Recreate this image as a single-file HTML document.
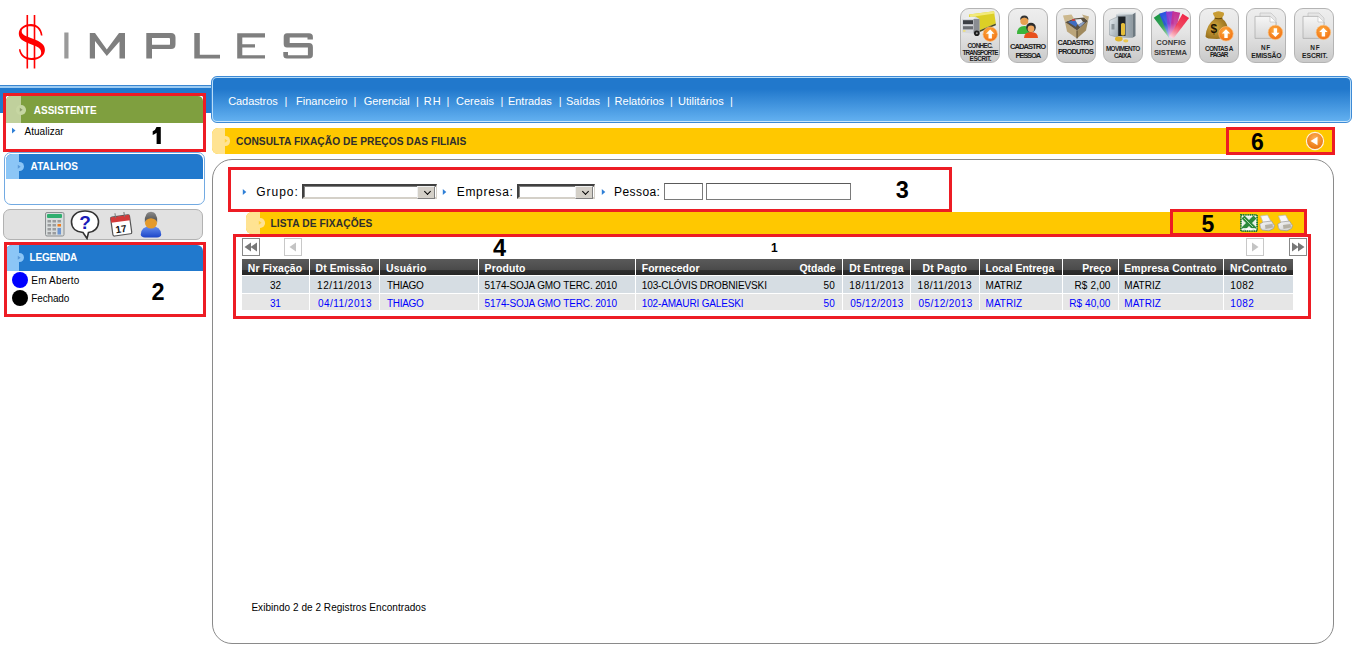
<!DOCTYPE html>
<html><head><meta charset="utf-8">
<style>
*{margin:0;padding:0;box-sizing:border-box}
html,body{width:1352px;height:648px;overflow:hidden;background:#fff;font-family:"Liberation Sans",sans-serif;position:relative}
.a{position:absolute}
.t{position:absolute;white-space:nowrap;line-height:1}
/* toolbar */
.tb{position:absolute;top:8px;width:40px;height:55px;border:1px solid #b4b4b4;border-radius:9px;background:linear-gradient(#eeeeee,#e4e4e4 45%,#c9c9c9);overflow:hidden}
.tb .lbl{position:absolute;left:-4px;right:-4px;text-align:center;font-family:"Liberation Sans",sans-serif;font-weight:bold;color:#333;font-size:6px;line-height:7px;letter-spacing:-0.2px}
/* redbox */
.rb{position:absolute;border:3px solid #ed1c24}
.num{position:absolute;font-family:"Liberation Sans",sans-serif;font-weight:bold;font-size:21px;line-height:1;color:#000}
.hdr{position:absolute;height:26px;border-radius:6px 6px 0 0;overflow:hidden}
.hdr .lt{position:absolute;left:0;top:0;bottom:0;width:13px}
.hdr .ring{position:absolute;left:8px;top:8px;width:10px;height:10px;border-radius:50%;border:2px solid rgba(255,255,255,0.35)}
.hdr .tx{position:absolute;left:24px;top:9px;font-weight:bold;font-size:10.2px;line-height:1;color:#fff;white-space:nowrap}
.menu span{position:absolute;top:96px;color:#fff;font-size:11px;line-height:1;white-space:nowrap}
.sel{background:#fff;border-top:2px solid #404040;border-left:2px solid #404040;border-right:1px solid #d4d0c8;border-bottom:2px solid #d4d0c8;box-shadow:inset 1px 1px 0 #808080}
.sel:after{content:"";position:absolute;right:1px;top:0px;width:16px;height:11px;background:#d4d0c8;border:1px solid #808080;border-top-color:#f0f0f0;border-left-color:#f0f0f0}
.sel:before{content:"";position:absolute;right:6.5px;top:2.5px;width:4px;height:4px;border-right:1.5px solid #000;border-bottom:1.5px solid #000;transform:rotate(45deg);z-index:2}
.inp{background:#fff;border:1px solid #7a7a7a;border-top-color:#5a5a5a}
.pbtn{width:18px;height:18px;border:1px solid #888;background:#fff}
.pbtn svg{position:absolute;left:0;top:0}
.th{position:absolute;top:259px;height:16px;background:linear-gradient(#5a5a5a,#4a4a4a 70%,#2e2e2e 72%,#262626);color:#fff;font-weight:bold;font-size:10.4px;line-height:18px;white-space:nowrap;overflow:hidden}
.td{position:absolute;font-size:10px;white-space:nowrap;overflow:hidden}
.r1{top:276px;height:17px;background:#d6dde3;color:#000;line-height:18px}
.r2{top:294px;height:16px;background:#e6e6e6;color:#0000ff;line-height:17px}
</style></head><body>

<!-- LOGO -->
<svg class="a" style="left:0;top:0" width="330" height="75" viewBox="0 0 330 75">
  <path d="M42.5 35.5 C41.7 28 37 24 31 24 C23.5 24 18.8 28.5 18.8 33.5 C18.8 38.5 22.5 41 29 43.5 L36 46.3 C39.8 47.8 41.2 50 41.2 52.8 C41.2 56.3 37.5 57.9 31.5 57.9 C25.5 57.9 21.5 55 20.4 49.3 L18.9 49.3 C19.5 55.5 24.5 60.1 31.5 60.1 C39.5 60.1 44.9 55.5 44.9 50 C44.9 44.5 40.5 41.5 33.5 39 L27 36.6 C23.5 35.3 21.7 33.5 21.7 31.5 C21.7 28.3 25.5 26.3 31 26.3 C36.5 26.3 40 29.5 40.9 35.5 Z" fill="#ff0000"/>
  <rect x="26.5" y="15" width="1.6" height="53.5" fill="#ff0000"/>
  <rect x="33.7" y="15" width="1.6" height="53.5" fill="#ff0000"/>
  <rect x="64.3" y="32.5" width="4.2" height="26" fill="#9a9a9a"/>
  <g fill="#7f7f7f">
    <path d="M89.8 33 H95 L106.8 49.5 L119 33 H125 V58.5 H119.5 V41.5 L106.8 56 L95 41 V58.5 H89.8 Z"/>
    <path d="M146.3 33 H171 Q175.5 33 175.5 37.5 V44.5 Q175.5 49 171 49 H152 V58.5 H146.3 Z M152 38 V44.7 H169.7 Q170 44.7 170 44 V39 Q170 38 169 38 Z" fill-rule="evenodd"/>
    <path d="M194.3 33 H199.8 V54.7 H220 V58.5 H194.3 Z"/>
    <path d="M237.2 33.3 H265 V37.6 H242.3 V44.3 H255 V47.6 H242.3 V55.3 H265 V58.6 H237.2 Z"/>
    <path d="M287 33.3 H309 Q312.9 33.3 312.9 37 V39.6 H307.5 V37.6 H289.7 V43 H309 Q312.9 43 312.9 47 V54.8 Q312.9 58.6 309 58.6 H287 Q283.3 58.6 283.3 55 V52 H288 V55.3 H307.9 V47.6 H287 Q283.7 47.6 283.7 44 V37 Q283.7 33.3 287 33.3 Z"/>
  </g>
</svg>

<!-- TOOLBAR -->
<!--TB-->
<svg class="a" width="0" height="0"><defs><radialGradient id="og" cx="0.45" cy="0.35" r="0.7"><stop offset="0" stop-color="#ffb040"/><stop offset="1" stop-color="#f06a10"/></radialGradient><linearGradient id="dg" x1="0" y1="0" x2="0" y2="1"><stop offset="0" stop-color="#f6f6f6"/><stop offset="1" stop-color="#d8d8d8"/></linearGradient></defs></svg>
<div class="tb" style="left:960px"><svg class="a" style="left:-1px;top:-1px" width="40" height="40" viewBox="0 0 40 40"><defs></defs><g><path d="M9 6.5 L34 3.2 L35.8 15.5 L18 23 L9 20 Z" fill="#dccf26"/><path d="M9 6.5 L34 3.2 L34.8 5.6 L10.5 9 Z" fill="#f2ea7a"/><path d="M18 23 L35.8 15.5 L35.8 17.2 L18 24.8 Z" fill="#4a4a20"/><path d="M2 11 L6 9 L16 8.8 L19.5 11 V24.5 L16 26 L2 24.5 Z" fill="#d6d8dc"/><path d="M2 11 L6 9 L16 8.8 L13.5 11 Z" fill="#eceef0"/><path d="M13.5 11 L19.5 11 V24.5 L16 26 L13.5 25 Z" fill="#8a8d92"/><rect x="3" y="12.2" width="10" height="4" fill="#3c3f44"/><rect x="3" y="18.2" width="10" height="3.2" fill="#6a6d72"/><rect x="3" y="22.2" width="2.5" height="1.5" fill="#f0e070"/><circle cx="16.8" cy="25.2" r="2.8" fill="#1e1e1e"/><circle cx="16.8" cy="25.2" r="1" fill="#9a9a9a"/><circle cx="30.2" cy="26.2" r="7.2" fill="url(#og)" stroke="#fbc27a" stroke-width="0.7"/><path d="M30.2 21.6 L26 25.8 H28.5 V30.4 H31.9 V25.8 H34.4 Z" fill="#fff"/></g></svg></div>
<div class="tb" style="left:1008px"><svg class="a" style="left:-1px;top:-1px" width="40" height="40" viewBox="0 0 40 40"><defs></defs><g><circle cx="16.3" cy="13" r="4" fill="#e8a050"/><path d="M12.2 12 Q12 7.5 16.3 7.5 Q20.6 7.5 20.4 12 Q19 9.5 16.3 9.5 Q13.6 9.5 12.2 12 Z" fill="#333"/><path d="M9 26 Q9 18 16.5 18 Q23 18 23 26 Z" fill="#3cb43c"/><circle cx="23" cy="19.5" r="4.8" fill="#2c2c2c"/><circle cx="23" cy="20.8" r="3.4" fill="#f0a860"/><path d="M16 30 Q16 24 23 24 Q30 24 30 30 Z" fill="#e8501c"/></g></svg></div>
<div class="tb" style="left:1056px"><svg class="a" style="left:-1px;top:-1px" width="40" height="40" viewBox="0 0 40 40"><defs></defs><g><path d="M9 14 L21 22.5 L21 30.5 L11 23.5 Z" fill="#bba57a"/><path d="M21 22.5 L32 13 L30 22.5 L21 30.5 Z" fill="#a08a5e"/><path d="M9 14 L18 10.5 L28 9.5 L32 13 L21 22.5 Z" fill="#5a5040"/><path d="M12 14 L18 12 L22 14 L20 19 Z" fill="#3f6cc0"/><path d="M19 11.5 L25 11 L27 14 L22 17 Z" fill="#e6eaf0"/><path d="M22 17 L27 14 L29 14.5 L24 19 Z" fill="#8aa0c8"/><rect x="16" y="11" width="3" height="2" fill="#c04040"/><path d="M9 14 L7 7.5 L15.5 6.5 L18 10.5 Z" fill="#ccb88e"/><path d="M28 9.5 L26 6.5 L33 8.5 L32 13 Z" fill="#c0ab80"/><path d="M21 22.5 L21 30.5" stroke="#3a3020" stroke-width="0.8"/></g></svg></div>
<div class="tb" style="left:1103px"><svg class="a" style="left:-1px;top:-1px" width="40" height="40" viewBox="0 0 40 40"><defs></defs><g><defs><linearGradient id="sfb" x1="0" y1="0" x2="1" y2="0"><stop offset="0" stop-color="#c4ccd2"/><stop offset="1" stop-color="#8e9aa2"/></linearGradient><linearGradient id="sfd" x1="0" y1="0" x2="1" y2="1"><stop offset="0" stop-color="#e8eef2"/><stop offset="1" stop-color="#9aa6ae"/></linearGradient></defs><path d="M13 6.5 L17 4.5 H32.5 L29.5 6.5 Z" fill="#dfe5e8"/><rect x="13" y="6.5" width="16.5" height="23.3" fill="url(#sfb)"/><path d="M29.5 6.5 L32.5 4.5 V28 L29.5 29.8 Z" fill="#6c7880"/><rect x="15" y="8.5" width="7.5" height="19.5" fill="#1e2328"/><path d="M6.5 12.5 L15 8.5 V29.5 L6.5 27 Z" fill="url(#sfd)" stroke="#8a949a" stroke-width="0.5"/><rect x="8.5" y="16" width="3" height="5.5" fill="#8a949a"/><rect x="18" y="15" width="4" height="12.5" rx="1.6" fill="#e6be3a"/><ellipse cx="15.8" cy="31" rx="3.8" ry="2.4" fill="#e0b42a"/><ellipse cx="22.8" cy="32.8" rx="2.6" ry="1.6" fill="#ecc850"/></g></svg></div>
<div class="tb" style="left:1151px"><svg class="a" style="left:-1px;top:-1px" width="40" height="40" viewBox="0 0 40 40"><defs></defs><g><defs><linearGradient id="fg0" x1="6.0" y1="7.5" x2="20.4" y2="29.5" gradientUnits="userSpaceOnUse"><stop offset="0" stop-color="#1c9644"/><stop offset="0.45" stop-color="#1c9644" stop-opacity="0.85"/><stop offset="1" stop-color="#c8ecd0"/></linearGradient><linearGradient id="fg1" x1="12.0" y1="4.5" x2="20.4" y2="29.5" gradientUnits="userSpaceOnUse"><stop offset="0" stop-color="#2a52e0"/><stop offset="0.45" stop-color="#2a52e0" stop-opacity="0.85"/><stop offset="1" stop-color="#d0dbf8"/></linearGradient><linearGradient id="fg2" x1="18.8" y1="3.5" x2="20.4" y2="29.5" gradientUnits="userSpaceOnUse"><stop offset="0" stop-color="#8a38d0"/><stop offset="0.45" stop-color="#8a38d0" stop-opacity="0.85"/><stop offset="1" stop-color="#e8d4f6"/></linearGradient><linearGradient id="fg3" x1="25.4" y1="4.0" x2="20.4" y2="29.5" gradientUnits="userSpaceOnUse"><stop offset="0" stop-color="#c43094"/><stop offset="0.45" stop-color="#c43094" stop-opacity="0.85"/><stop offset="1" stop-color="#f6d4ea"/></linearGradient><linearGradient id="fg4" x1="34.8" y1="7.8" x2="20.4" y2="29.5" gradientUnits="userSpaceOnUse"><stop offset="0" stop-color="#f02848"/><stop offset="0.45" stop-color="#f02848" stop-opacity="0.85"/><stop offset="1" stop-color="#fcd8de"/></linearGradient></defs><path d="M22.24 28.30 L18.56 30.70 L2.74 9.64 L9.26 5.36 Z" fill="url(#fg0)"/><path d="M22.49 28.80 L18.31 30.20 L8.30 5.74 L15.70 3.26 Z" fill="url(#fg1)"/><path d="M22.60 29.36 L18.20 29.64 L14.91 3.74 L22.69 3.26 Z" fill="url(#fg2)"/><path d="M22.56 29.92 L18.24 29.08 L21.57 3.25 L29.23 4.75 Z" fill="url(#fg3)"/><path d="M22.23 30.72 L18.57 28.28 L31.55 5.64 L38.05 9.96 Z" fill="url(#fg4)"/></g></svg></div>
<div class="tb" style="left:1199px"><svg class="a" style="left:-1px;top:-1px" width="40" height="40" viewBox="0 0 40 40"><defs></defs><g><defs><radialGradient id="bgg" cx="0.4" cy="0.45" r="0.7"><stop offset="0" stop-color="#d8ac40"/><stop offset="1" stop-color="#8a6418"/></radialGradient></defs><path d="M14.5 7 Q13 4 16 4.2 Q19.5 2.5 22.5 4 Q25.8 4 24.8 7.2 L22.5 10.5 L16.5 10.5 Z" fill="#c89c34"/><path d="M16.5 10 L22.5 10 Q29.5 15 29 24 Q28.5 31 18 31 Q6.5 31 6.5 28.5 Q7 17 16.5 10 Z" fill="url(#bgg)"/><path d="M15.5 10 Q19.5 11.5 23.5 10" stroke="#6a4a08" stroke-width="1.2" fill="none"/><text x="11.6" y="25" font-family="Liberation Sans" font-weight="bold" font-size="12" fill="#1e1400">$</text><circle cx="27" cy="25.8" r="7.2" fill="url(#og)" stroke="#fbc27a" stroke-width="0.7"/><path d="M27 21.2 L22.8 25.4 H25.3 V30 H28.7 V25.4 H31.2 Z" fill="#fff"/></g></svg></div>
<div class="tb" style="left:1246px"><svg class="a" style="left:-1px;top:-1px" width="40" height="40" viewBox="0 0 40 40"><defs></defs><g><path d="M14 5 H25 L30 10 V28 H14 Z" fill="#e6e6e6" stroke="#bcbcbc" stroke-width="0.6"/><path d="M9 8.4 H24 L30 14 V30.4 H9 Z" fill="url(#dg)" stroke="#a8a8a8" stroke-width="0.7"/><path d="M24 8.4 V14 H30" fill="#fff" stroke="#bbb" stroke-width="0.6"/><circle cx="29.4" cy="24.4" r="7.2" fill="url(#og)" stroke="#fbc27a" stroke-width="0.7"/><path d="M29.4 29.0 L25.2 24.799999999999997 H27.7 V20.2 H31.099999999999998 V24.799999999999997 H33.6 Z" fill="#fff"/></g></svg></div>
<div class="tb" style="left:1294px"><svg class="a" style="left:-1px;top:-1px" width="40" height="40" viewBox="0 0 40 40"><defs></defs><g><path d="M14 5 H25 L30 10 V28 H14 Z" fill="#e6e6e6" stroke="#bcbcbc" stroke-width="0.6"/><path d="M9 8.4 H24 L30 14 V30.4 H9 Z" fill="url(#dg)" stroke="#a8a8a8" stroke-width="0.7"/><path d="M24 8.4 V14 H30" fill="#fff" stroke="#bbb" stroke-width="0.6"/><circle cx="29.4" cy="24.4" r="7.2" fill="url(#og)" stroke="#fbc27a" stroke-width="0.7"/><path d="M29.4 19.799999999999997 L25.2 24.0 H27.7 V28.599999999999998 H31.099999999999998 V24.0 H33.6 Z" fill="#fff"/></g></svg></div>
<!--/TB-->

<!-- left blue strip -->
<div class="a" style="left:0;top:85px;width:212px;height:28px;background:#2179cd;border-top:1px solid #3a86d0"></div>
<div class="a" style="left:0;top:86px;width:212px;height:1.5px;background:#9ccbf2"></div>

<div class="a" style="left:1340px;top:85px;width:12px;height:28px;background:#2179cd;border-top:1px solid #3a86d0"></div>
<div class="a" style="left:1340px;top:86px;width:12px;height:1.5px;background:#9ccbf2"></div>
<!-- MENU BAR -->
<div class="a" style="left:211px;top:76px;width:1141px;height:47px;border-radius:6px;border:1px solid #3d8ad6;background:linear-gradient(#2178cc 0px,#2178cc 12px,#62b0f0 44px)"></div>
<div class="a" style="left:212px;top:77px;width:1139px;height:45px;border-radius:5px;border:1px solid #b7dcf8;border-bottom-color:#c9e6fb"></div>


<!-- SIDEBAR -->
<div class="a" style="left:5px;top:95px;width:199px;height:56px;background:#fff;border-radius:5px 5px 0 0"></div>
<div class="hdr" style="left:6px;top:96px;width:197px;height:27px;background:#7f9f3f;border-radius:5px 5px 0 0">
  <div class="lt" style="width:15px;background:#c0d09c"></div>
  <div class="ring" style="left:10.35px;top:9.05px;width:9.5px;height:9.5px;border:0;background:#c6d6a2"><svg style="position:absolute;left:0;top:0" width="10" height="10"><path d="M3.8 2.8 L6.6 4.75 L3.8 6.7 Z" fill="rgba(90,110,60,0.55)"/></svg></div>
</div>
<svg class="a" style="left:11px;top:127px" width="6" height="8"><path d="M1 0.8 L4.5 3.6 L1 6.6 Z" fill="#2f7fd6"/></svg>
<div class="rb" style="left:3px;top:93px;width:203px;height:59px"></div>

<div class="a" style="left:4px;top:152px;width:201px;height:53px;border:1px solid #72aae2;border-radius:7px"></div>
<div class="hdr" style="left:6px;top:153.5px;width:197px;height:25.5px;background:#2179cd;border-radius:6px 6px 0 0">
  <div class="lt" style="width:13px;background:#8cc6f6"></div>
  <div class="ring" style="left:8.25px;top:8.05px;width:9.5px;height:9.5px;border:0;background:#8cc6f6"><svg style="position:absolute;left:0;top:0" width="10" height="10"><path d="M3.8 2.8 L6.6 4.75 L3.8 6.7 Z" fill="rgba(40,110,190,0.5)"/></svg></div>
</div>

<div class="a" style="left:3px;top:209px;width:200px;height:31px;border:1.8px solid #b2b2b2;border-radius:7px;background:#e1e1e1"></div>
<!-- calculator -->
<svg class="a" style="left:44px;top:211px" width="22" height="27" viewBox="0 0 22 27">
  <rect x="1.5" y="1.5" width="18.5" height="23.5" rx="1.5" fill="#d8dcdc" stroke="#8a8e90" stroke-width="1"/>
  <rect x="3" y="3" width="15" height="4" rx="1" fill="#2fae6f"/>
  <g fill="#9a9c9e"><rect x="3.5" y="9" width="3.5" height="2.5"/><rect x="8.5" y="9" width="3.5" height="2.5"/><rect x="13.5" y="9" width="3.5" height="2.5"/>
  <rect x="3.5" y="13" width="3.5" height="2.5"/><rect x="8.5" y="13" width="3.5" height="2.5"/>
  <rect x="3.5" y="17" width="3.5" height="2.5"/><rect x="8.5" y="17" width="3.5" height="2.5"/>
  <rect x="3.5" y="21" width="3.5" height="2.5"/><rect x="8.5" y="21" width="3.5" height="2.5"/></g>
  <rect x="13.5" y="13" width="3.5" height="2.5" fill="#f07f1e"/><rect x="13.5" y="17" width="3.5" height="6.5" fill="#6f96d0"/>
</svg>
<!-- question bubble -->
<svg class="a" style="left:70px;top:209px" width="31" height="31" viewBox="0 0 31 31">
  <path d="M15 2 C23 2 28.5 6.5 28.5 13 C28.5 19 24 23 18.5 23.5 L17 29.5 L13 23.5 C6 23 1.5 19 1.5 13 C1.5 6.5 7 2 15 2 Z" fill="#fff" stroke="#333" stroke-width="1.6"/>
  <text x="9.3" y="19.6" font-family="Liberation Sans" font-weight="bold" font-size="19" fill="#1a1ab8">?</text>
</svg>
<!-- calendar -->
<svg class="a" style="left:109px;top:211px" width="25" height="26" viewBox="0 0 25 26">
  <g transform="rotate(-8 12 13)">
  <rect x="2.5" y="5" width="19" height="19" rx="1.5" fill="#fff" stroke="#555" stroke-width="1.2"/>
  <rect x="2.5" y="5" width="19" height="5.5" fill="#d23a3a"/>
  <rect x="7" y="1.5" width="1" height="5" fill="#777"/><rect x="16" y="1.5" width="1" height="5" fill="#777"/>
  <text x="5.8" y="21.5" font-family="Liberation Sans" font-weight="bold" font-size="10" fill="#111">17</text>
  </g>
</svg>
<!-- person -->
<svg class="a" style="left:140px;top:211px" width="23" height="27" viewBox="0 0 23 27">
  <defs><linearGradient id="pbg" x1="0" y1="0" x2="0" y2="1"><stop offset="0" stop-color="#6690f0"/><stop offset="1" stop-color="#1d46c8"/></linearGradient>
  <linearGradient id="pcap" x1="0" y1="0" x2="0" y2="1"><stop offset="0" stop-color="#8a8a8a"/><stop offset="1" stop-color="#4a4a4a"/></linearGradient></defs>
  <path d="M0.8 23.5 Q1 15.2 11 15.2 Q21 15.2 21.2 23.5 Q21.2 26.2 17 26.4 H5 Q0.8 26.2 0.8 23.5 Z" fill="url(#pbg)"/>
  <ellipse cx="11" cy="12" rx="6" ry="5.6" fill="#e39a2c"/>
  <path d="M4.8 11.5 Q4.2 0.8 11 0.8 Q17.8 0.8 17.2 11.5 Q16 7.5 11 7.2 Q6 7.5 4.8 11.5 Z" fill="url(#pcap)"/>
</svg>

<div class="hdr" style="left:6px;top:245px;width:197px;height:26px;background:#2179cd;border-radius:6px 6px 0 0">
  <div class="lt" style="width:13px;background:#8cc6f6"></div>
  <div class="ring" style="left:8.25px;top:7.85px;width:9.5px;height:9.5px;border:0;background:#8cc6f6"><svg style="position:absolute;left:0;top:0" width="10" height="10"><path d="M3.8 2.8 L6.6 4.75 L3.8 6.7 Z" fill="rgba(40,110,190,0.5)"/></svg></div>
</div>
<div class="a" style="left:12px;top:272px;width:16px;height:16px;border-radius:50%;background:#0000ff"></div>
<div class="a" style="left:12px;top:290px;width:16px;height:16px;border-radius:50%;background:#000"></div>
<div class="rb" style="left:3.5px;top:242px;width:202px;height:75px"></div>

<!-- TITLE BAR -->
<div class="hdr" style="left:211.5px;top:128px;width:1122px;height:26px;background:#ffc800;border-radius:6px 0 0 6px">
  <div class="lt" style="width:13.5px;background:#ffe392"></div>
  <div class="ring" style="left:9.45px;top:8.25px;width:9.5px;height:9.5px;border:0;background:#ffe392"><svg style="position:absolute;left:0;top:0" width="10" height="10"><path d="M3.8 2.8 L6.6 4.75 L3.8 6.7 Z" fill="rgba(255,200,0,0.6)"/></svg></div>
</div>
<svg class="a" style="left:1305px;top:131px" width="20" height="20" viewBox="0 0 20 20">
  <defs><radialGradient id="bg2" cx="0.5" cy="0.35" r="0.7"><stop offset="0" stop-color="#ffb25a"/><stop offset="1" stop-color="#e66a00"/></radialGradient></defs>
  <circle cx="10" cy="10" r="8.6" fill="url(#bg2)" stroke="#fff3dc" stroke-width="1.2"/>
  <path d="M5.5 10 L12.5 5.8 V14.2 Z" fill="#fff"/>
</svg>
<div class="rb" style="left:1226px;top:127px;width:109px;height:28px"></div>

<!-- MAIN BOX -->
<div class="a" style="left:212px;top:159px;width:1122px;height:485px;border:1.6px solid #8a8a8a;border-radius:20px"></div>


<!-- FILTER ROW -->
<svg class="a" style="left:242px;top:188px" width="6" height="8"><path d="M0.8 1 L4.3 4 L0.8 7 Z" fill="#2f7fd6"/></svg>
<div class="a sel" style="left:302px;top:184px;width:135px;height:15px"></div>
<svg class="a" style="left:442px;top:188px" width="6" height="8"><path d="M0.8 1 L4.3 4 L0.8 7 Z" fill="#2f7fd6"/></svg>
<div class="a sel" style="left:517px;top:184px;width:78px;height:15px"></div>
<svg class="a" style="left:601px;top:188px" width="6" height="8"><path d="M0.8 1 L4.3 4 L0.8 7 Z" fill="#2f7fd6"/></svg>
<div class="a inp" style="left:664px;top:183px;width:39px;height:17px"></div>
<div class="a inp" style="left:706px;top:183px;width:145px;height:17px"></div>
<div class="rb" style="left:228px;top:167px;width:724px;height:45px"></div>

<!-- LISTA BAR -->
<div class="hdr" style="left:246px;top:212px;width:1059px;height:22px;background:#ffc800;border-radius:6px 0 0 6px">
  <div class="lt" style="width:14px;background:#ffe392"></div>
  <div class="ring" style="left:9.25px;top:6.05px;width:9.5px;height:9.5px;border:0;background:#ffe392"><svg style="position:absolute;left:0;top:0" width="10" height="10"><path d="M3.8 2.8 L6.6 4.75 L3.8 6.7 Z" fill="rgba(255,200,0,0.6)"/></svg></div>
</div>
<!-- excel + printers -->
<svg class="a" style="left:1240px;top:214px" width="18" height="18" viewBox="0 0 18 18">
  <rect x="0.9" y="0.9" width="16.2" height="16.2" fill="#fff" stroke="#1f7a2f" stroke-width="1.8" stroke-dasharray="1.3 0.5"/>
  <rect x="2.5" y="2.5" width="13" height="13" fill="#e8f0e8"/>
  <path d="M4.5 4.5 L13.5 13.5 M13.5 4.5 L4.5 13.5" stroke="#2c8a3c" stroke-width="4.2" stroke-linecap="square"/>
  <path d="M4 4 L13 13" stroke="#d8f0d8" stroke-width="0.7"/>
  <rect x="3" y="14.2" width="12" height="1.6" fill="#fff"/>
</svg>
<svg class="a" style="left:1259px;top:214px" width="17" height="18" viewBox="0 0 17 18">
  <defs><linearGradient id="pg" x1="0" y1="0" x2="1" y2="1"><stop offset="0" stop-color="#fafafa"/><stop offset="1" stop-color="#c8c8c8"/></linearGradient></defs>
  <path d="M1.5 2 L8.5 1 L12 7.5 L4.5 9.5 Z" fill="#f8f8f8" stroke="#b8b8b8" stroke-width="0.7"/>
  <path d="M0.8 10 L4.5 8 L12.5 7 L15.5 11.5 L14.5 14.5 L10 16.8 L3 16 Q0.8 14 0.8 10 Z" fill="url(#pg)" stroke="#9a9a9a" stroke-width="0.7"/>
  <path d="M6 11 L13.5 10 L14 13.5 L6.5 15 Z" fill="#b4b0a4"/>
</svg>
<svg class="a" style="left:1277px;top:214px" width="17" height="18" viewBox="0 0 17 18">
  <path d="M1.5 2 L8.5 1 L12 7.5 L4.5 9.5 Z" fill="#f8f8f8" stroke="#b8b8b8" stroke-width="0.7"/>
  <path d="M0.8 10 L4.5 8 L12.5 7 L15.5 11.5 L14.5 14.5 L10 16.8 L3 16 Q0.8 14 0.8 10 Z" fill="url(#pg)" stroke="#9a9a9a" stroke-width="0.7"/>
  <path d="M6 11 L13.5 10 L14 13.5 L6.5 15 Z" fill="#b4b0a4"/>
</svg>
<div class="rb" style="left:1170px;top:209px;width:137px;height:27px"></div>

<!-- PAGER -->
<div class="a pbtn" style="left:242px;top:238px"><svg width="16" height="16" viewBox="0 0 16 16"><path d="M1.5 8 L8 3.5 V12.5 Z M7.5 8 L14 3.5 V12.5 Z" fill="#777"/></svg></div>
<div class="a pbtn" style="left:284px;top:238px;border-color:#c8c8c8"><svg width="16" height="16" viewBox="0 0 16 16"><path d="M4.5 8 L11 3.5 V12.5 Z" fill="#c4c4c4"/></svg></div>
<div class="a pbtn" style="left:1246px;top:238px;border-color:#c8c8c8"><svg width="16" height="16" viewBox="0 0 16 16"><path d="M11.5 8 L5 3.5 V12.5 Z" fill="#c4c4c4"/></svg></div>
<div class="a pbtn" style="left:1289px;top:238px"><svg width="16" height="16" viewBox="0 0 16 16"><path d="M8.5 8 L2 3.5 V12.5 Z M14.5 8 L8 3.5 V12.5 Z" fill="#777"/></svg></div>

<!-- TABLE -->
<div class="th" style="left:242px;width:67px;text-align:center;"></div>
<div class="td r1" style="left:242px;width:67px;text-align:center;"></div>
<div class="td r2" style="left:242px;width:67px;text-align:center;"></div>
<div class="th" style="left:310px;width:69px;text-align:center;"></div>
<div class="td r1" style="left:310px;width:69px;text-align:center;"></div>
<div class="td r2" style="left:310px;width:69px;text-align:center;"></div>
<div class="th" style="left:380px;width:98px;text-align:left;padding:0 6px"></div>
<div class="td r1" style="left:380px;width:98px;text-align:left;padding:0 6px"></div>
<div class="td r2" style="left:380px;width:98px;text-align:left;padding:0 6px"></div>
<div class="th" style="left:479px;width:156px;text-align:left;padding:0 6px"></div>
<div class="td r1" style="left:479px;width:156px;text-align:left;padding:0 6px"></div>
<div class="td r2" style="left:479px;width:156px;text-align:left;padding:0 6px"></div>
<div class="th" style="left:636px;width:154px;text-align:left;padding:0 6px"></div>
<div class="td r1" style="left:636px;width:154px;text-align:left;padding:0 6px"></div>
<div class="td r2" style="left:636px;width:154px;text-align:left;padding:0 6px"></div>
<div class="th" style="left:790px;width:52px;text-align:right;padding:0 6px"></div>
<div class="td r1" style="left:790px;width:52px;text-align:right;padding:0 6px"></div>
<div class="td r2" style="left:790px;width:52px;text-align:right;padding:0 6px"></div>
<div class="th" style="left:843px;width:67px;text-align:center;"></div>
<div class="td r1" style="left:843px;width:67px;text-align:center;"></div>
<div class="td r2" style="left:843px;width:67px;text-align:center;"></div>
<div class="th" style="left:911px;width:68px;text-align:center;"></div>
<div class="td r1" style="left:911px;width:68px;text-align:center;"></div>
<div class="td r2" style="left:911px;width:68px;text-align:center;"></div>
<div class="th" style="left:980px;width:82px;text-align:left;padding:0 6px"></div>
<div class="td r1" style="left:980px;width:82px;text-align:left;padding:0 6px"></div>
<div class="td r2" style="left:980px;width:82px;text-align:left;padding:0 6px"></div>
<div class="th" style="left:1063px;width:55px;text-align:right;padding:0 6px"></div>
<div class="td r1" style="left:1063px;width:55px;text-align:right;padding:0 6px"></div>
<div class="td r2" style="left:1063px;width:55px;text-align:right;padding:0 6px"></div>
<div class="th" style="left:1119px;width:104px;text-align:left;padding:0 6px"></div>
<div class="td r1" style="left:1119px;width:104px;text-align:left;padding:0 6px"></div>
<div class="td r2" style="left:1119px;width:104px;text-align:left;padding:0 6px"></div>
<div class="th" style="left:1224px;width:69px;text-align:left;padding:0 6px"></div>
<div class="td r1" style="left:1224px;width:69px;text-align:left;padding:0 6px"></div>
<div class="td r2" style="left:1224px;width:69px;text-align:left;padding:0 6px"></div>
<div class="rb" style="left:233px;top:234px;width:1078px;height:85px;"></div>


<svg class="a" style="left:150px;top:125px" width="14" height="21" viewBox="150 125 14 21"><path d="M156.5 127 H160.8 V144 H156.6 V132.8 Q154.9 134.2 152.7 134.9 V131.3 Q155.6 130.2 156.5 127 Z" fill="#000"/></svg>
<div class="a" style="left:228.20px;top:96.00px;color:#fff;font-family:&quot;Liberation Sans&quot;,sans-serif;font-size:11px;font-weight:normal;letter-spacing:-0.075px;line-height:1;white-space:nowrap">Cadastros</div>
<div class="a" style="left:284.40px;top:96.00px;color:#fff;font-family:&quot;Liberation Sans&quot;,sans-serif;font-size:11px;font-weight:normal;letter-spacing:0.000px;line-height:1;white-space:nowrap">|</div>
<div class="a" style="left:296.00px;top:96.00px;color:#fff;font-family:&quot;Liberation Sans&quot;,sans-serif;font-size:11px;font-weight:normal;letter-spacing:0.000px;line-height:1;white-space:nowrap">Financeiro</div>
<div class="a" style="left:353.60px;top:96.00px;color:#fff;font-family:&quot;Liberation Sans&quot;,sans-serif;font-size:11px;font-weight:normal;letter-spacing:0.000px;line-height:1;white-space:nowrap">|</div>
<div class="a" style="left:363.80px;top:96.00px;color:#fff;font-family:&quot;Liberation Sans&quot;,sans-serif;font-size:11px;font-weight:normal;letter-spacing:-0.150px;line-height:1;white-space:nowrap">Gerencial</div>
<div class="a" style="left:416.00px;top:96.00px;color:#fff;font-family:&quot;Liberation Sans&quot;,sans-serif;font-size:11px;font-weight:normal;letter-spacing:0.000px;line-height:1;white-space:nowrap">|</div>
<div class="a" style="left:423.80px;top:96.00px;color:#fff;font-family:&quot;Liberation Sans&quot;,sans-serif;font-size:11px;font-weight:normal;letter-spacing:1.000px;line-height:1;white-space:nowrap">RH</div>
<div class="a" style="left:446.50px;top:96.00px;color:#fff;font-family:&quot;Liberation Sans&quot;,sans-serif;font-size:11px;font-weight:normal;letter-spacing:0.000px;line-height:1;white-space:nowrap">|</div>
<div class="a" style="left:455.90px;top:96.00px;color:#fff;font-family:&quot;Liberation Sans&quot;,sans-serif;font-size:11px;font-weight:normal;letter-spacing:0.050px;line-height:1;white-space:nowrap">Cereais</div>
<div class="a" style="left:500.50px;top:96.00px;color:#fff;font-family:&quot;Liberation Sans&quot;,sans-serif;font-size:11px;font-weight:normal;letter-spacing:0.000px;line-height:1;white-space:nowrap">|</div>
<div class="a" style="left:508.00px;top:96.00px;color:#fff;font-family:&quot;Liberation Sans&quot;,sans-serif;font-size:11px;font-weight:normal;letter-spacing:-0.043px;line-height:1;white-space:nowrap">Entradas</div>
<div class="a" style="left:558.80px;top:96.00px;color:#fff;font-family:&quot;Liberation Sans&quot;,sans-serif;font-size:11px;font-weight:normal;letter-spacing:0.000px;line-height:1;white-space:nowrap">|</div>
<div class="a" style="left:565.90px;top:96.00px;color:#fff;font-family:&quot;Liberation Sans&quot;,sans-serif;font-size:11px;font-weight:normal;letter-spacing:-0.020px;line-height:1;white-space:nowrap">Saídas</div>
<div class="a" style="left:607.00px;top:96.00px;color:#fff;font-family:&quot;Liberation Sans&quot;,sans-serif;font-size:11px;font-weight:normal;letter-spacing:0.000px;line-height:1;white-space:nowrap">|</div>
<div class="a" style="left:614.60px;top:96.00px;color:#fff;font-family:&quot;Liberation Sans&quot;,sans-serif;font-size:11px;font-weight:normal;letter-spacing:-0.011px;line-height:1;white-space:nowrap">Relatórios</div>
<div class="a" style="left:670.00px;top:96.00px;color:#fff;font-family:&quot;Liberation Sans&quot;,sans-serif;font-size:11px;font-weight:normal;letter-spacing:0.000px;line-height:1;white-space:nowrap">|</div>
<div class="a" style="left:678.00px;top:96.00px;color:#fff;font-family:&quot;Liberation Sans&quot;,sans-serif;font-size:11px;font-weight:normal;letter-spacing:0.050px;line-height:1;white-space:nowrap">Utilitários</div>
<div class="a" style="left:730.00px;top:96.00px;color:#fff;font-family:&quot;Liberation Sans&quot;,sans-serif;font-size:11px;font-weight:normal;letter-spacing:0.000px;line-height:1;white-space:nowrap">|</div>
<div class="a" style="left:33.80px;top:106.00px;color:#fff;font-family:&quot;Liberation Sans&quot;,sans-serif;font-size:10px;font-weight:bold;letter-spacing:0.000px;line-height:1;white-space:nowrap">ASSISTENTE</div>
<div class="a" style="left:24.50px;top:127.00px;color:#000;font-family:&quot;Liberation Sans&quot;,sans-serif;font-size:10px;font-weight:normal;letter-spacing:0.025px;line-height:1;white-space:nowrap">Atualizar</div>
<div class="a" style="left:30.60px;top:162.00px;color:#fff;font-family:&quot;Liberation Sans&quot;,sans-serif;font-size:10px;font-weight:bold;letter-spacing:0.083px;line-height:1;white-space:nowrap">ATALHOS</div>
<div class="a" style="left:29.60px;top:253.00px;color:#fff;font-family:&quot;Liberation Sans&quot;,sans-serif;font-size:10px;font-weight:bold;letter-spacing:-0.217px;line-height:1;white-space:nowrap">LEGENDA</div>
<div class="a" style="left:31.30px;top:276.00px;color:#000;font-family:&quot;Liberation Sans&quot;,sans-serif;font-size:10px;font-weight:normal;letter-spacing:0.175px;line-height:1;white-space:nowrap">Em Aberto</div>
<div class="a" style="left:31.30px;top:294.00px;color:#000;font-family:&quot;Liberation Sans&quot;,sans-serif;font-size:10px;font-weight:normal;letter-spacing:-0.150px;line-height:1;white-space:nowrap">Fechado</div>
<div class="a" style="left:151.50px;top:281.00px;color:#000;font-family:&quot;Liberation Sans&quot;,sans-serif;font-size:23.5px;font-weight:bold;letter-spacing:0.000px;line-height:1;white-space:nowrap">2</div>
<div class="a" style="left:895.70px;top:179.00px;color:#000;font-family:&quot;Liberation Sans&quot;,sans-serif;font-size:23.5px;font-weight:bold;letter-spacing:0.000px;line-height:1;white-space:nowrap">3</div>
<div class="a" style="left:493.10px;top:237.00px;color:#000;font-family:&quot;Liberation Sans&quot;,sans-serif;font-size:23.5px;font-weight:bold;letter-spacing:0.000px;line-height:1;white-space:nowrap">4</div>
<div class="a" style="left:1201.60px;top:213.00px;color:#000;font-family:&quot;Liberation Sans&quot;,sans-serif;font-size:23px;font-weight:bold;letter-spacing:0.000px;line-height:1;white-space:nowrap">5</div>
<div class="a" style="left:1250.90px;top:131.00px;color:#000;font-family:&quot;Liberation Sans&quot;,sans-serif;font-size:23px;font-weight:bold;letter-spacing:0.000px;line-height:1;white-space:nowrap">6</div>
<div class="a" style="left:236.00px;top:137.00px;color:#2e2e2e;font-family:&quot;Liberation Sans&quot;,sans-serif;font-size:10.2px;font-weight:bold;letter-spacing:0.049px;line-height:1;white-space:nowrap">CONSULTA FIXAÇÃO DE PREÇOS DAS FILIAIS</div>
<div class="a" style="left:270.40px;top:219.00px;color:#2e2e2e;font-family:&quot;Liberation Sans&quot;,sans-serif;font-size:10.2px;font-weight:bold;letter-spacing:0.112px;line-height:1;white-space:nowrap">LISTA DE FIXAÇÕES</div>
<div class="a" style="left:256.20px;top:186.00px;color:#000;font-family:&quot;Liberation Sans&quot;,sans-serif;font-size:12px;font-weight:normal;letter-spacing:0.980px;line-height:1;white-space:nowrap">Grupo:</div>
<div class="a" style="left:456.70px;top:186.00px;color:#000;font-family:&quot;Liberation Sans&quot;,sans-serif;font-size:12px;font-weight:normal;letter-spacing:0.700px;line-height:1;white-space:nowrap">Empresa:</div>
<div class="a" style="left:614.00px;top:186.00px;color:#000;font-family:&quot;Liberation Sans&quot;,sans-serif;font-size:12px;font-weight:normal;letter-spacing:0.433px;line-height:1;white-space:nowrap">Pessoa:</div>
<div class="a" style="left:771.00px;top:242.00px;color:#000;font-family:&quot;Liberation Sans&quot;,sans-serif;font-size:12px;font-weight:bold;letter-spacing:0.000px;line-height:1;white-space:nowrap">1</div>
<div class="a" style="left:251.40px;top:603.00px;color:#000;font-family:&quot;Liberation Sans&quot;,sans-serif;font-size:10px;font-weight:normal;letter-spacing:0.047px;line-height:1;white-space:nowrap">Exibindo 2 de 2 Registros Encontrados</div>
<div class="a" style="left:247.80px;top:264.00px;color:#fff;font-family:&quot;Liberation Sans&quot;,sans-serif;font-size:10.4px;font-weight:bold;letter-spacing:0.133px;line-height:1;white-space:nowrap">Nr Fixação</div>
<div class="a" style="left:315.60px;top:264.00px;color:#fff;font-family:&quot;Liberation Sans&quot;,sans-serif;font-size:10.4px;font-weight:bold;letter-spacing:0.067px;line-height:1;white-space:nowrap">Dt Emissão</div>
<div class="a" style="left:385.90px;top:264.00px;color:#fff;font-family:&quot;Liberation Sans&quot;,sans-serif;font-size:10.4px;font-weight:bold;letter-spacing:0.283px;line-height:1;white-space:nowrap">Usuário</div>
<div class="a" style="left:484.60px;top:264.00px;color:#fff;font-family:&quot;Liberation Sans&quot;,sans-serif;font-size:10.4px;font-weight:bold;letter-spacing:0.167px;line-height:1;white-space:nowrap">Produto</div>
<div class="a" style="left:641.80px;top:264.00px;color:#fff;font-family:&quot;Liberation Sans&quot;,sans-serif;font-size:10.4px;font-weight:bold;letter-spacing:0.056px;line-height:1;white-space:nowrap">Fornecedor</div>
<div class="a" style="left:799.40px;top:264.00px;color:#fff;font-family:&quot;Liberation Sans&quot;,sans-serif;font-size:10.4px;font-weight:bold;letter-spacing:0.060px;line-height:1;white-space:nowrap">Qtdade</div>
<div class="a" style="left:849.20px;top:264.00px;color:#fff;font-family:&quot;Liberation Sans&quot;,sans-serif;font-size:10.4px;font-weight:bold;letter-spacing:0.189px;line-height:1;white-space:nowrap">Dt Entrega</div>
<div class="a" style="left:922.40px;top:264.00px;color:#fff;font-family:&quot;Liberation Sans&quot;,sans-serif;font-size:10.4px;font-weight:bold;letter-spacing:0.257px;line-height:1;white-space:nowrap">Dt Pagto</div>
<div class="a" style="left:985.60px;top:264.00px;color:#fff;font-family:&quot;Liberation Sans&quot;,sans-serif;font-size:10.4px;font-weight:bold;letter-spacing:-0.008px;line-height:1;white-space:nowrap">Local Entrega</div>
<div class="a" style="left:1082.20px;top:264.00px;color:#fff;font-family:&quot;Liberation Sans&quot;,sans-serif;font-size:10.4px;font-weight:bold;letter-spacing:0.025px;line-height:1;white-space:nowrap">Preço</div>
<div class="a" style="left:1124.30px;top:264.00px;color:#fff;font-family:&quot;Liberation Sans&quot;,sans-serif;font-size:10.4px;font-weight:bold;letter-spacing:0.140px;line-height:1;white-space:nowrap">Empresa Contrato</div>
<div class="a" style="left:1230.00px;top:264.00px;color:#fff;font-family:&quot;Liberation Sans&quot;,sans-serif;font-size:10.4px;font-weight:bold;letter-spacing:0.211px;line-height:1;white-space:nowrap">NrContrato</div>
<div class="a" style="left:270.10px;top:281.00px;color:#000;font-family:&quot;Liberation Sans&quot;,sans-serif;font-size:10px;font-weight:normal;letter-spacing:-0.200px;line-height:1;white-space:nowrap">32</div>
<div class="a" style="left:317.00px;top:281.00px;color:#000;font-family:&quot;Liberation Sans&quot;,sans-serif;font-size:10px;font-weight:normal;letter-spacing:0.578px;line-height:1;white-space:nowrap">12/11/2013</div>
<div class="a" style="left:386.90px;top:281.00px;color:#000;font-family:&quot;Liberation Sans&quot;,sans-serif;font-size:10px;font-weight:normal;letter-spacing:-0.280px;line-height:1;white-space:nowrap">THIAGO</div>
<div class="a" style="left:484.60px;top:281.00px;color:#000;font-family:&quot;Liberation Sans&quot;,sans-serif;font-size:10px;font-weight:normal;letter-spacing:-0.130px;line-height:1;white-space:nowrap">5174-SOJA GMO TERC. 2010</div>
<div class="a" style="left:641.80px;top:281.00px;color:#000;font-family:&quot;Liberation Sans&quot;,sans-serif;font-size:10px;font-weight:normal;letter-spacing:-0.129px;line-height:1;white-space:nowrap">103-CLÓVIS DROBNIEVSKI</div>
<div class="a" style="left:823.40px;top:281.00px;color:#000;font-family:&quot;Liberation Sans&quot;,sans-serif;font-size:10px;font-weight:normal;letter-spacing:0.200px;line-height:1;white-space:nowrap">50</div>
<div class="a" style="left:849.20px;top:281.00px;color:#000;font-family:&quot;Liberation Sans&quot;,sans-serif;font-size:10px;font-weight:normal;letter-spacing:0.556px;line-height:1;white-space:nowrap">18/11/2013</div>
<div class="a" style="left:917.60px;top:281.00px;color:#000;font-family:&quot;Liberation Sans&quot;,sans-serif;font-size:10px;font-weight:normal;letter-spacing:0.511px;line-height:1;white-space:nowrap">18/11/2013</div>
<div class="a" style="left:985.60px;top:281.00px;color:#000;font-family:&quot;Liberation Sans&quot;,sans-serif;font-size:10px;font-weight:normal;letter-spacing:0.000px;line-height:1;white-space:nowrap">MATRIZ</div>
<div class="a" style="left:1074.40px;top:281.00px;color:#000;font-family:&quot;Liberation Sans&quot;,sans-serif;font-size:10px;font-weight:normal;letter-spacing:0.167px;line-height:1;white-space:nowrap">R$ 2,00</div>
<div class="a" style="left:1124.30px;top:281.00px;color:#000;font-family:&quot;Liberation Sans&quot;,sans-serif;font-size:10px;font-weight:normal;letter-spacing:0.000px;line-height:1;white-space:nowrap">MATRIZ</div>
<div class="a" style="left:1230.20px;top:281.00px;color:#000;font-family:&quot;Liberation Sans&quot;,sans-serif;font-size:10px;font-weight:normal;letter-spacing:0.433px;line-height:1;white-space:nowrap">1082</div>
<div class="a" style="left:270.10px;top:299.00px;color:#0000ff;font-family:&quot;Liberation Sans&quot;,sans-serif;font-size:10px;font-weight:normal;letter-spacing:-0.500px;line-height:1;white-space:nowrap">31</div>
<div class="a" style="left:318.00px;top:299.00px;color:#0000ff;font-family:&quot;Liberation Sans&quot;,sans-serif;font-size:10px;font-weight:normal;letter-spacing:0.467px;line-height:1;white-space:nowrap">04/11/2013</div>
<div class="a" style="left:386.90px;top:299.00px;color:#0000ff;font-family:&quot;Liberation Sans&quot;,sans-serif;font-size:10px;font-weight:normal;letter-spacing:-0.280px;line-height:1;white-space:nowrap">THIAGO</div>
<div class="a" style="left:484.60px;top:299.00px;color:#0000ff;font-family:&quot;Liberation Sans&quot;,sans-serif;font-size:10px;font-weight:normal;letter-spacing:-0.130px;line-height:1;white-space:nowrap">5174-SOJA GMO TERC. 2010</div>
<div class="a" style="left:641.80px;top:299.00px;color:#0000ff;font-family:&quot;Liberation Sans&quot;,sans-serif;font-size:10px;font-weight:normal;letter-spacing:-0.165px;line-height:1;white-space:nowrap">102-AMAURI GALESKI</div>
<div class="a" style="left:823.40px;top:299.00px;color:#0000ff;font-family:&quot;Liberation Sans&quot;,sans-serif;font-size:10px;font-weight:normal;letter-spacing:0.200px;line-height:1;white-space:nowrap">50</div>
<div class="a" style="left:850.20px;top:299.00px;color:#0000ff;font-family:&quot;Liberation Sans&quot;,sans-serif;font-size:10px;font-weight:normal;letter-spacing:0.333px;line-height:1;white-space:nowrap">05/12/2013</div>
<div class="a" style="left:918.60px;top:299.00px;color:#0000ff;font-family:&quot;Liberation Sans&quot;,sans-serif;font-size:10px;font-weight:normal;letter-spacing:0.400px;line-height:1;white-space:nowrap">05/12/2013</div>
<div class="a" style="left:985.60px;top:299.00px;color:#0000ff;font-family:&quot;Liberation Sans&quot;,sans-serif;font-size:10px;font-weight:normal;letter-spacing:0.000px;line-height:1;white-space:nowrap">MATRIZ</div>
<div class="a" style="left:1069.20px;top:299.00px;color:#0000ff;font-family:&quot;Liberation Sans&quot;,sans-serif;font-size:10px;font-weight:normal;letter-spacing:0.086px;line-height:1;white-space:nowrap">R$ 40,00</div>
<div class="a" style="left:1124.30px;top:299.00px;color:#0000ff;font-family:&quot;Liberation Sans&quot;,sans-serif;font-size:10px;font-weight:normal;letter-spacing:0.000px;line-height:1;white-space:nowrap">MATRIZ</div>
<div class="a" style="left:1230.20px;top:299.00px;color:#0000ff;font-family:&quot;Liberation Sans&quot;,sans-serif;font-size:10px;font-weight:normal;letter-spacing:0.433px;line-height:1;white-space:nowrap">1082</div>
<div class="a" style="left:967.40px;top:43.00px;color:#1e1e1e;font-family:&quot;Liberation Sans&quot;,sans-serif;font-size:6.4px;font-weight:bold;letter-spacing:-0.667px;line-height:1;white-space:nowrap">CONHEC.</div>
<div class="a" style="left:962.50px;top:50.00px;color:#1e1e1e;font-family:&quot;Liberation Sans&quot;,sans-serif;font-size:6.4px;font-weight:bold;letter-spacing:-0.878px;line-height:1;white-space:nowrap">TRANSPORTE</div>
<div class="a" style="left:969.60px;top:56.00px;color:#1e1e1e;font-family:&quot;Liberation Sans&quot;,sans-serif;font-size:6.4px;font-weight:bold;letter-spacing:-0.417px;line-height:1;white-space:nowrap">ESCRIT.</div>
<div class="a" style="left:1009.90px;top:43.00px;color:#1e1e1e;font-family:&quot;Liberation Sans&quot;,sans-serif;font-size:7.6px;font-weight:bold;letter-spacing:-0.957px;line-height:1;white-space:nowrap">CADASTRO</div>
<div class="a" style="left:1015.50px;top:52.00px;color:#1e1e1e;font-family:&quot;Liberation Sans&quot;,sans-serif;font-size:7.6px;font-weight:bold;letter-spacing:-1.200px;line-height:1;white-space:nowrap">PESSOA</div>
<div class="a" style="left:1057.60px;top:39.00px;color:#1e1e1e;font-family:&quot;Liberation Sans&quot;,sans-serif;font-size:7.4px;font-weight:bold;letter-spacing:-0.800px;line-height:1;white-space:nowrap">CADASTRO</div>
<div class="a" style="left:1058.00px;top:48.00px;color:#1e1e1e;font-family:&quot;Liberation Sans&quot;,sans-serif;font-size:7.4px;font-weight:bold;letter-spacing:-0.829px;line-height:1;white-space:nowrap">PRODUTOS</div>
<div class="a" style="left:1105.90px;top:46.00px;color:#1e1e1e;font-family:&quot;Liberation Sans&quot;,sans-serif;font-size:6.4px;font-weight:bold;letter-spacing:-0.625px;line-height:1;white-space:nowrap">MOVIMENTO</div>
<div class="a" style="left:1113.90px;top:53.00px;color:#1e1e1e;font-family:&quot;Liberation Sans&quot;,sans-serif;font-size:6.4px;font-weight:bold;letter-spacing:-0.625px;line-height:1;white-space:nowrap">CAIXA</div>
<div class="a" style="left:1205.00px;top:46.00px;color:#1e1e1e;font-family:&quot;Liberation Sans&quot;,sans-serif;font-size:6.4px;font-weight:bold;letter-spacing:-0.629px;line-height:1;white-space:nowrap">CONTAS A</div>
<div class="a" style="left:1209.90px;top:52.00px;color:#1e1e1e;font-family:&quot;Liberation Sans&quot;,sans-serif;font-size:6.4px;font-weight:bold;letter-spacing:-1.025px;line-height:1;white-space:nowrap">PAGAR</div>
<div class="a" style="left:1261.10px;top:45.00px;color:#1e1e1e;font-family:&quot;Liberation Sans&quot;,sans-serif;font-size:6.4px;font-weight:bold;letter-spacing:-0.600px;line-height:1;white-space:nowrap">N F</div>
<div class="a" style="left:1251.30px;top:53.00px;color:#1e1e1e;font-family:&quot;Liberation Sans&quot;,sans-serif;font-size:6.8px;font-weight:bold;letter-spacing:-0.183px;line-height:1;white-space:nowrap">EMISSÃO</div>
<div class="a" style="left:1310.20px;top:45.00px;color:#1e1e1e;font-family:&quot;Liberation Sans&quot;,sans-serif;font-size:6.4px;font-weight:bold;letter-spacing:-0.450px;line-height:1;white-space:nowrap">N F</div>
<div class="a" style="left:1302.10px;top:53.00px;color:#1e1e1e;font-family:&quot;Liberation Sans&quot;,sans-serif;font-size:6.8px;font-weight:bold;letter-spacing:-0.100px;line-height:1;white-space:nowrap">ESCRIT.</div>
<div class="a" style="left:1156.20px;top:39.00px;color:#3a3a3a;font-family:&quot;Liberation Sans&quot;,sans-serif;font-size:7.6px;font-weight:bold;letter-spacing:0.060px;line-height:1;white-space:nowrap">CONFIG</div>
<div class="a" style="left:1153.90px;top:49.00px;color:#3a3a3a;font-family:&quot;Liberation Sans&quot;,sans-serif;font-size:7.6px;font-weight:bold;letter-spacing:-0.117px;line-height:1;white-space:nowrap">SISTEMA</div>
</body></html>
